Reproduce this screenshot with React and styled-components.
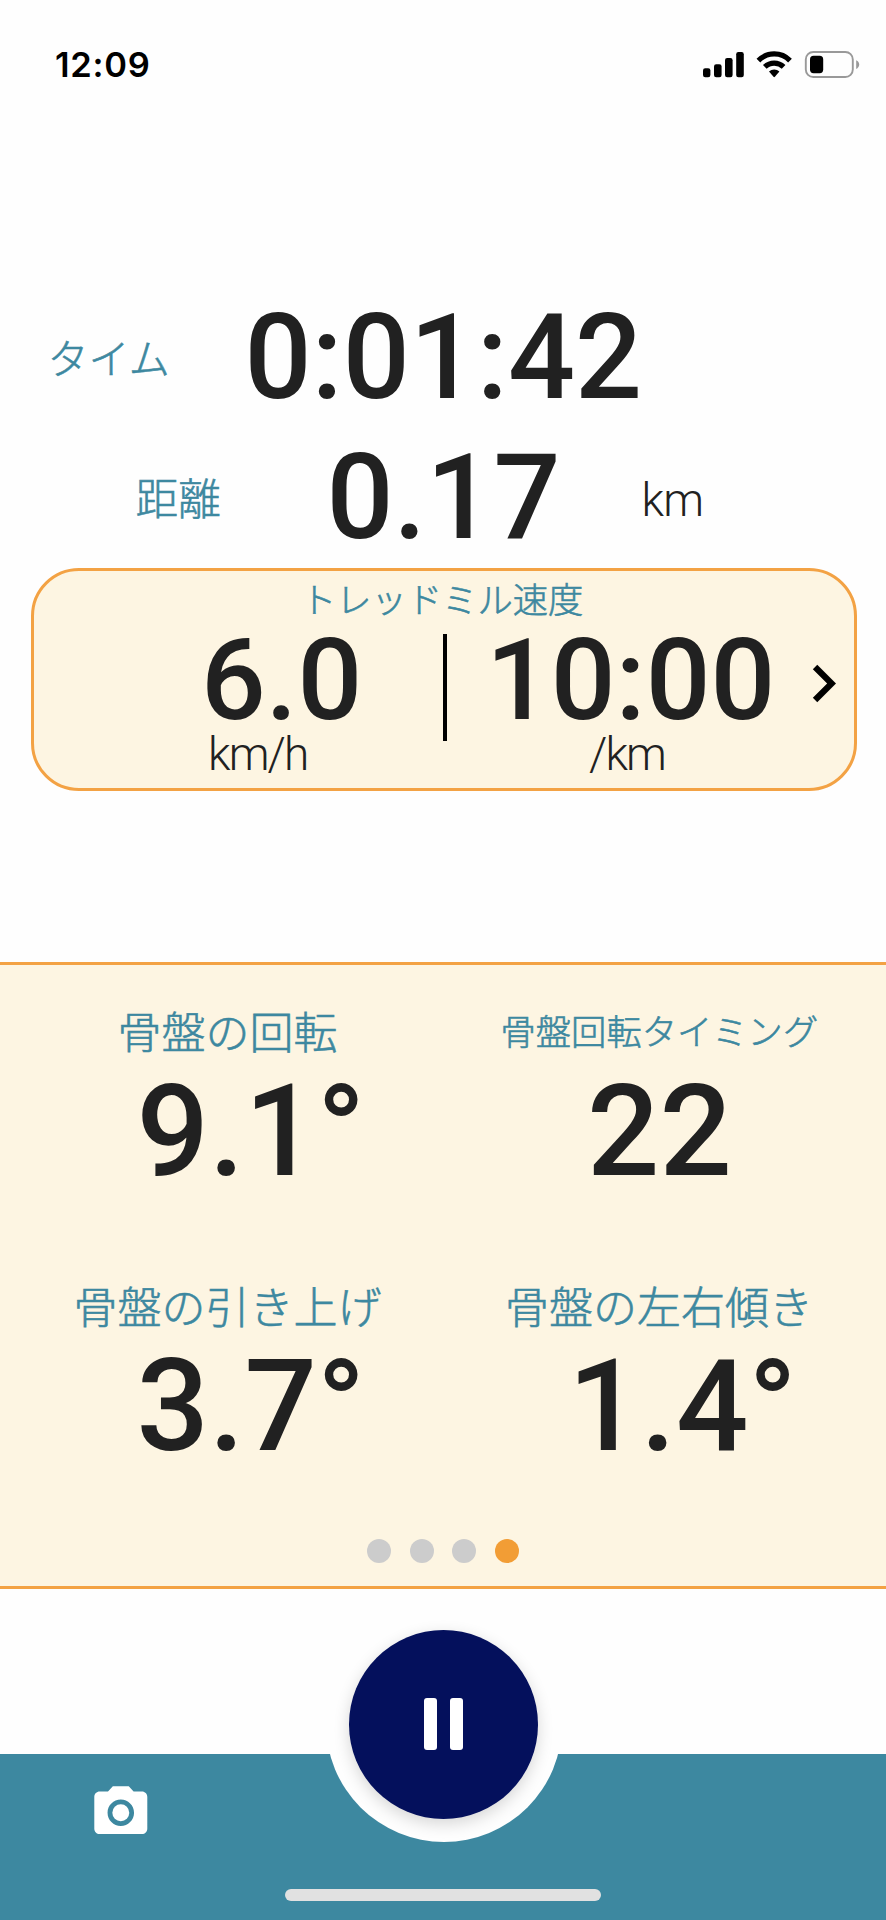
import React from "react";
import styled, { createGlobalStyle } from "styled-components";

const COLORS = {
  teal: "#3d88a0",
  cream: "#fdf5e2",
  orange: "#f29d35",
  border: "#f3a244",
  navy: "#04105c",
  ink: "#212121",
  gray: "#cccccc",
};

const METRICS = [
  { label: "骨盤の回転", value: "9.1°", size: 44, labelX: 117.5, valueX: 136.5 },
  { label: "骨盤回転タイミング", value: "22", size: 35.3, labelX: 57.5, valueX: 144 },
  { label: "骨盤の引き上げ", value: "3.7°", size: 44, labelX: 73.5, valueX: 136.5 },
  { label: "骨盤の左右傾き", value: "1.4°", size: 44, labelX: 62, valueX: 125 },
];

export default function App() {
  return (
    <Screen>
      <GlobalStyle />
      <StatusBar>
        <Clock>12:09</Clock>
        <StatusIcons />
      </StatusBar>

      <Summary>
        <Row>
          <Label $size={41} $left={47.5} $lift={6}>タイム</Label>
          <Value $size={118} $left={244.5}>0:01:42</Value>
        </Row>
        <Row>
          <Label $size={42.7} $left={135.5} $lift={4}>距離</Label>
          <Value $size={118} $left={326.5}>0.17</Value>
          <Unit $left={641.5}>km</Unit>
        </Row>
      </Summary>

      <SpeedCard>
        <CardTitle>トレッドミル速度</CardTitle>
        <CardBody>
          <Speed $width={409}>
            <CardValue $left={167}>6.0</CardValue>
            <CardUnit $left={174}>km/h</CardUnit>
          </Speed>
          <Divider />
          <Speed $width={339}>
            <CardValue $left={39}>10:00</CardValue>
            <CardUnit $left={142}>/km</CardUnit>
          </Speed>
          <Chevron viewBox="0 0 24 24">
            <path d="M10 6 8.59 7.41 13.17 12l-4.58 4.59L10 18l6-6z" />
          </Chevron>
        </CardBody>
      </SpeedCard>

      <Panel>
        <MetricGrid>
          {METRICS.map((m) => (
            <Metric key={m.label}>
              <MetricLabel $size={m.size} $left={m.labelX}>{m.label}</MetricLabel>
              <MetricValue $left={m.valueX}>{m.value}</MetricValue>
            </Metric>
          ))}
        </MetricGrid>
        <Dots>
          <Dot />
          <Dot />
          <Dot />
          <Dot $active />
        </Dots>
      </Panel>

      <Footer>
        <CameraIcon viewBox="0 0 24 24">
          <circle cx="12" cy="12" r="3.2" />
          <path d="M9 2 7.17 4H4c-1.1 0-2 .9-2 2v12c0 1.1.9 2 2 2h16c1.1 0 2-.9 2-2V6c0-1.1-.9-2-2-2h-3.17L15 2H9zm3 15c-2.76 0-5-2.24-5-5s2.24-5 5-5 5 2.24 5 5-2.24 5-5 5z" />
        </CameraIcon>
        <ButtonRing>
          <PauseButton aria-label="pause">
            <PauseBar />
            <PauseBar />
          </PauseButton>
        </ButtonRing>
        <HomeIndicator />
      </Footer>
    </Screen>
  );
}

function StatusIcons() {
  return (
    <svg width="158" height="30" viewBox="702 50 158 30">
      <rect x="703" y="68.3" width="7.4" height="8.9" rx="2.2" />
      <rect x="714" y="64.3" width="7.6" height="12.9" rx="2.2" />
      <rect x="725" y="58" width="7.6" height="19.2" rx="2.2" />
      <rect x="736.2" y="52" width="7.6" height="25.2" rx="2.2" />
      <g fill="none" stroke="#000" strokeWidth="5.2">
        <path d="M758.400 60.600a22 22 0 0 1 31.600 0" />
        <path d="M764.800 66.900a13.400 13.400 0 0 1 18.800 0" />
      </g>
      <path d="M769 71.6a7.6 7.6 0 0 1 10.4 0L774.9 76.8q-.7.7-1.4 0z" />
      <rect x="805.8" y="52" width="47" height="25" rx="7.5" fill="none" stroke="#999" strokeWidth="1.9" />
      <rect x="810" y="55.8" width="13.2" height="17.4" rx="3.6" />
      <path d="M856.2 60.2v8.8c1.9-.8 3-2.5 3-4.4s-1.1-3.6-3-4.4z" fill="#999" />
    </svg>
  );
}

const GlobalStyle = createGlobalStyle`
  * {
    box-sizing: border-box;
  }

  body {
    margin: 0;
    background: #fefefe;
  }
`;

const Screen = styled.main`
  width: 886px;
  height: 1920px;
  display: flex;
  flex-direction: column;
  overflow: hidden;
  color: ${COLORS.ink};
  background: #fefefe;
  font-family: Roboto, "Noto Sans CJK JP", sans-serif;
`;

const StatusBar = styled.header`
  height: 130px;
  padding: 0 26px 0 55px;
  display: flex;
  align-items: center;
  justify-content: space-between;
  color: #000;
`;

const Clock = styled.span`
  font-family: Inter, sans-serif;
  font-size: 34.5px;
  font-weight: 600;
  line-height: 40px;
  letter-spacing: 0.7px;
`;

const Summary = styled.section`
  margin-top: 159px;
`;

/* every item shares the single cell and is offset by its own margin */
const Row = styled.div`
  height: 139.5px;
  display: grid;
  align-items: center;

  & > * {
    grid-area: 1 / 1;
  }
`;

const Label = styled.span`
  margin-left: ${({ $left }) => $left}px;
  padding-bottom: ${({ $lift = 0 }) => $lift}px;
  color: ${COLORS.teal};
  font-family: "Noto Sans CJK JP", sans-serif;
  font-size: ${({ $size }) => $size}px;
  font-weight: 300;
  -webkit-text-stroke: 0.6px ${COLORS.teal};
  line-height: 60px;
  white-space: nowrap;
`;

const Value = styled.span`
  margin-left: ${({ $left }) => $left}px;
  font-size: ${({ $size }) => $size}px;
  font-weight: 500;
  line-height: 139px;
  white-space: nowrap;
`;

const Unit = styled.span`
  margin-left: ${({ $left }) => $left}px;
  padding-top: 4px;
  font-size: 46px;
  font-weight: 300;
  line-height: 54px;
  letter-spacing: -0.8px;
`;

const SpeedCard = styled.section`
  width: 826px;
  height: 223px;
  margin-left: 31px;
  border: 3px solid ${COLORS.border};
  border-radius: 48px;
  background: ${COLORS.cream};
`;

const CardTitle = styled(Label)`
  display: block;
  margin-left: 267px;
  font-size: 35.3px;
  line-height: 54px;
`;

const CardBody = styled.div`
  display: flex;
  align-items: flex-start;
`;

const Speed = styled.div`
  width: ${({ $width }) => $width}px;
  display: flex;
  flex-direction: column;
  flex-shrink: 0;
`;

const CardValue = styled(Value)`
  font-size: 114px;
  line-height: 110px;
`;

const CardUnit = styled(Unit)`
  padding: 0;
  line-height: 38px;
  letter-spacing: -1.9px;
`;

const Divider = styled.div`
  width: 4px;
  height: 107px;
  margin-top: 9px;
  flex-shrink: 0;
  background: #000;
`;

const Chevron = styled.svg`
  width: 75px;
  height: 75px;
  margin: 21px 0 0 0;
  flex-shrink: 0;
`;

const Panel = styled.section`
  height: 627px;
  margin-top: 171px;
  padding-top: 34px;
  border: solid ${COLORS.border};
  border-width: 3px 0;
  background: ${COLORS.cream};
`;

const MetricGrid = styled.div`
  display: grid;
  grid-template-columns: 443px 443px;
  grid-auto-rows: 274.5px;
`;

const Metric = styled.div`
  display: flex;
  flex-direction: column;
`;

const MetricLabel = styled(Label)`
  line-height: 62px;
`;

const MetricValue = styled(Value)`
  font-size: 127.5px;
  line-height: 142px;
`;

const Dots = styled.div`
  display: flex;
  justify-content: center;
  gap: 18.5px;
  margin-top: -9px;
`;

const Dot = styled.span`
  width: 24px;
  height: 24px;
  border-radius: 50%;
  background: ${({ $active }) => ($active ? COLORS.orange : COLORS.gray)};
`;

const Footer = styled.footer`
  position: relative;
  height: 166px;
  margin-top: 165px;
  padding: 27px 0 0 89px;
  background: ${COLORS.teal};
`;

const CameraIcon = styled.svg`
  width: 63.6px;
  height: 63.6px;
  fill: #fff;
`;

const ButtonRing = styled.div`
  position: absolute;
  top: -148px;
  left: 325.5px;
  width: 236px;
  height: 236px;
  display: flex;
  align-items: center;
  justify-content: center;
  border-radius: 50%;
  background: #fefefe;
`;

const PauseButton = styled.button`
  width: 189px;
  height: 189px;
  padding: 0;
  display: flex;
  align-items: center;
  justify-content: center;
  gap: 13.5px;
  border: none;
  border-radius: 50%;
  background: ${COLORS.navy};
  box-shadow: 0 5px 16px rgba(0, 0, 0, 0.16);
`;

const PauseBar = styled.span`
  width: 12.7px;
  height: 52.5px;
  border-radius: 3px;
  background: #fff;
`;

const HomeIndicator = styled.div`
  position: absolute;
  left: 285px;
  bottom: 19px;
  width: 316px;
  height: 12px;
  border-radius: 6px;
  background: #e1e1e1;
`;
